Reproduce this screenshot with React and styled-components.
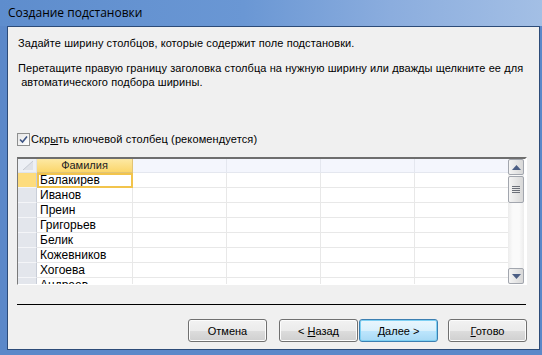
import React from 'react';
import styled, { createGlobalStyle } from 'styled-components';

const GlobalStyle = createGlobalStyle`
  html, body { margin: 0; padding: 0; }
  body {
    width: 542px;
    height: 355px;
    overflow: hidden;
    background: #5a87c8;
    font-family: "Liberation Sans", Arial, sans-serif;
  }
`;

const Frame = styled.div`
  width: 542px;
  height: 355px;
  display: flex;
  flex-direction: column;
`;

const TitleBar = styled.div`
  height: 26px;
  flex: none;
  display: flex;
  align-items: center;
  padding: 0 0 2px 8px;
  box-sizing: border-box;
  background: linear-gradient(90deg, #5e8dcd 0%, #6a97d4 45%, #8badde 72%, #a3bfe5 100%);
  font-family: "Open Sans", "Liberation Sans", sans-serif;
  font-size: 12px;
  color: #000;
`;

const FrameBody = styled.div`
  flex: 1;
  display: flex;
  padding: 0 6px 5px 7px;
  background: #5b88c9;
`;

const Client = styled.div`
  flex: 1;
  display: flex;
  flex-direction: column;
  background: #f0f0f0;
  border: 1px solid #2c4b78;
  padding: 0 12px 0 9px;
  font-size: 11px;
  color: #000;
`;

const Text = styled.div`
  line-height: 14px;
  padding-left: 1px;
  margin-top: ${p => p.$top}px;
  white-space: pre;
  letter-spacing: 0.08px;
`;

const CheckRow = styled.label`
  display: flex;
  align-items: center;
  height: 14px;
  margin-top: 43px;
  gap: 1px;
  font-size: 11px;
  letter-spacing: 0.12px;
`;

const CheckBox = styled.span`
  width: 13px;
  height: 13px;
  box-sizing: border-box;
  border: 1px solid #8e8f8f;
  background: linear-gradient(135deg, #e6e6e6, #ffffff);
  display: flex;
  align-items: center;
  justify-content: center;
`;

const Grid = styled.div`
  margin-top: 11px;
  width: 510px;
  height: 128px;
  box-sizing: border-box;
  display: flex;
  border-style: solid;
  border-width: 2px 2px 1px 1px;
  border-color: #6e6e6e #ffffff #ffffff #7a7a7a;
  background: #fff;
  overflow: hidden;
`;

const Sheet = styled.div`
  width: 490px;
  overflow: hidden;
`;

const Row = styled.div`
  display: grid;
  grid-template-columns: 19px 96px 94px 94px 94px 94px;
  height: ${p => (p.$head ? 14 : 15)}px;
`;

const Corner = styled.div`
  background: #edf0f5;
  border-right: 1px solid #dfe3ea;
  border-bottom: 1px solid #dfe3ea;
  overflow: hidden;
`;

const HeadCell = styled.div`
  box-sizing: border-box;
  background: ${p => (p.$active ? 'linear-gradient(#fde9a4, #fbd66b)' : '#f4f6fd')};
  border-right: 1px solid ${p => (p.$active ? '#e2c474' : '#e4e7ef')};
  border-bottom: 1px solid ${p => (p.$active ? '#e2c474' : '#e4e7ef')};
  text-align: center;
  font-size: 11px;
  line-height: 13px;
  color: #222;
`;

const Selector = styled.div`
  box-sizing: border-box;
  background: ${p => (p.$active ? '#fddc7d' : '#e3e6ec')};
  border-right: 1px solid #c9ced8;
  border-bottom: 1px solid #f4f5f8;
`;

const Cell = styled.div`
  box-sizing: border-box;
  border-right: 1px solid #e8e8e8;
  border-bottom: 1px solid #e8e8e8;
  font-size: 12px;
  line-height: 14px;
  padding-left: 3px;
  white-space: nowrap;
  overflow: hidden;
  ${p => p.$current && `
    border: 2px solid #f2c44c;
    line-height: 11px;
    padding-left: 1px;
  `}
`;

const ScrollBar = styled.div`
  width: 16px;
  display: flex;
  flex-direction: column;
  background: linear-gradient(90deg, #ececec, #fafafa 30%, #fafafa 70%, #ececec);
`;

const ScrollButton = styled.div`
  height: 16px;
  box-sizing: border-box;
  border: 1px solid #a2a6ae;
  border-radius: 2px;
  background: linear-gradient(90deg, #f4f4f4, #e6e6e6 50%, #d8d8d8);
  display: flex;
  align-items: center;
  justify-content: center;
  margin-top: ${p => (p.$bottom ? 'auto' : '0')};
`;

const Thumb = styled.div`
  height: 27px;
  margin-top: 1px;
  box-sizing: border-box;
  border: 1px solid #a2a6ae;
  border-radius: 2px;
  background: linear-gradient(90deg, #f4f4f4, #e6e6e6 50%, #d8d8d8);
  display: flex;
  flex-direction: column;
  align-items: center;
  justify-content: center;
  gap: 1px;
`;

const Grip = styled.span`
  width: 8px;
  height: 1px;
  background: #6b6f78;
`;

const Separator = styled.div`
  margin-top: 19px;
  width: 509px;
  height: 1px;
  background: #000;
`;

const Buttons = styled.div`
  margin-top: 14px;
  display: flex;
  justify-content: flex-end;
`;

const Button = styled.button`
  width: 79px;
  height: 23px;
  box-sizing: border-box;
  margin-left: ${p => p.$gap}px;
  border: 1px solid ${p => (p.$focus ? '#3c7fb1' : '#707070')};
  border-radius: 3px;
  background: ${p =>
    p.$focus
      ? 'linear-gradient(#eaf6fd 0%, #d9f0fc 50%, #bee6fd 51%, #a7d9f5 100%)'
      : 'linear-gradient(#f2f2f2 0%, #ebebeb 50%, #dddddd 51%, #cfcfcf 100%)'};
  box-shadow: inset 0 0 0 1px ${p => (p.$focus ? '#7ed0f3' : '#fcfcfc')};
  font-family: "Liberation Sans", Arial, sans-serif;
  font-size: 11px;
  color: #000;
  padding: 0;
`;

const names = ['Балакирев', 'Иванов', 'Преин', 'Григорьев', 'Белик', 'Кожевников', 'Хогоева', 'Андреев'];

const Arrow = ({ down }) => (
  <svg width="9" height="5" viewBox="0 0 9 5">
    <path d={down ? 'M0 0H9L4.5 5Z' : 'M0 5H9L4.5 0Z'} fill="#4b5e84" />
  </svg>
);

export default function App() {
  return (
    <>
      <GlobalStyle />
      <Frame>
        <TitleBar>Создание подстановки</TitleBar>
        <FrameBody>
          <Client>
            <Text $top={9}>Задайте ширину столбцов, которые содержит поле подстановки.</Text>
            <Text $top={11}>
              Перетащите правую границу заголовка столбца на нужную ширину или дважды щелкните ее для
              {'\n'} автоматического подбора ширины.
            </Text>
            <CheckRow>
              <CheckBox>
                <svg width="9" height="9" viewBox="0 0 9 9">
                  <path d="M1 4.5L3.5 7L8 1.5" fill="none" stroke="#3d5484" strokeWidth="1.6" />
                </svg>
              </CheckBox>
              <span>Скр<u>ы</u>ть ключевой столбец (рекомендуется)</span>
            </CheckRow>
            <Grid>
              <Sheet>
                <Row $head>
                  <Corner>
                    <svg width="18" height="13" viewBox="0 0 18 13" style={{ display: 'block' }}>
                      <path d="M5 11H15V2Z" fill="#dfe2e8" />
                      <path d="M5 11L15 2" stroke="#c5cad3" strokeWidth="1" />
                    </svg>
                  </Corner>
                  <HeadCell $active>Фамилия</HeadCell>
                  <HeadCell />
                  <HeadCell />
                  <HeadCell />
                  <HeadCell />
                </Row>
                {names.map((n, i) => (
                  <Row key={n}>
                    <Selector $active={i === 0} />
                    <Cell $current={i === 0}>{n}</Cell>
                    <Cell />
                    <Cell />
                    <Cell />
                    <Cell />
                  </Row>
                ))}
              </Sheet>
              <ScrollBar>
                <ScrollButton><Arrow /></ScrollButton>
                <Thumb><Grip /><Grip /><Grip /><Grip /></Thumb>
                <ScrollButton $bottom><Arrow down /></ScrollButton>
              </ScrollBar>
            </Grid>
            <Separator />
            <Buttons>
              <Button $gap={0}>Отмена</Button>
              <Button $gap={12}>&lt; <u>Н</u>азад</Button>
              <Button $gap={1} $focus><u>Д</u>алее &gt;</Button>
              <Button $gap={10}><u>Г</u>отово</Button>
            </Buttons>
          </Client>
        </FrameBody>
      </Frame>
    </>
  );
}
